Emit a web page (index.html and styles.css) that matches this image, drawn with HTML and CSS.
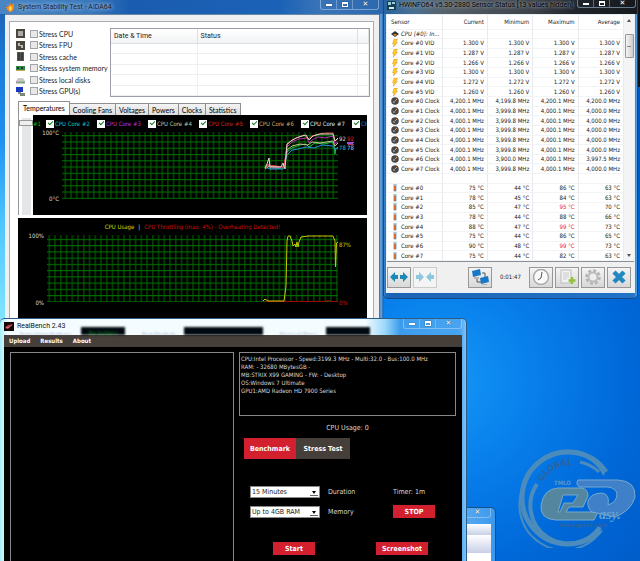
FILE: index.html
```
<!DOCTYPE html>
<html lang="en">
<head>
    <meta charset="UTF-8">
    <meta name="viewport" content="width=device-width, initial-scale=1.0">
    <title>Desktop</title>
    <link rel="stylesheet" href="styles.css">
</head>
<body>
    <div class="desktop">

        <svg class="watermark" width="124" height="104" viewBox="514 444 124 104">
            <g fill="none" stroke="#4c8cbc">
                <path d="M606 472 A46 46 0 1 0 600 531" stroke-width="5"/>
                <path d="M604 475 A42 42 0 0 0 527 480 A42 42 0 0 0 602 530" stroke-width="2"/>
                <path d="M599 472 A38 38 0 0 0 580 462" stroke-width="3"/>
                <path d="M537 484 A36 36 0 0 0 600 527" stroke-width="4"/>
            </g>
            <path fill="#5486a0" stroke="#78a8c8" fill-rule="evenodd" d="M558 488 H582 Q588 489 588 496 L583 507 H569 L566 512 H598 L594 520 H556 Q540 519 541 506 Q543 489 558 488 Z M563 495 H578 L573 503 H564 L560 512 H558 Z"/>
            <path fill="#3f80c8" stroke="#78a8d0" d="M578 480 H618 Q636 481 635 497 Q631 511 615 517 L592 512 Q587 508 588 501 Q591 493 602 493 Q610 494 608 505 Q617 502 617 494 Q616 488 608 487 H580 Q575 485 578 480 Z"/>
            <path id="ring" d="M543 482 A29 29 0 0 1 590 474" fill="none"/>
            <text class="wm-ring"><textPath href="#ring">GLOBAL</textPath></text>
            <text class="wm-top" x="554" y="485">TMLO</text>
            <text class="wm-asy" x="599" y="519">asy.</text>
            <text class="wm-url" x="559" y="527">www.gecid.com</text>
        </svg>

        <section class="window back-window">
            <div class="caption-buttons"><button class="close" aria-label="Close">✕</button></div>
            <div class="band"></div>
            <div class="band tall"></div>
            <div class="blank"></div>
        </section>

        <section class="window aida">
            <header class="titlebar">
                <svg width="9" height="10" viewBox="0 0 9 10"><path d="M1 2 L3 4 L4 0 L5 3 L8 1 L8 6 Q7 10 4 10 Q1 9 0 5 L2 5 Z" fill="#f08a18"/><path d="M3 5 L5 4 L6 6 L5 9 L3 8 Z" fill="#ffd850"/></svg>
                <h1>System Stability Test - AIDA64</h1>
                <div class="caption-buttons">
                    <button aria-label="Minimize"><i class="min"></i></button><button aria-label="Maximize"><i class="max"></i></button><button class="close" aria-label="Close">✕</button>
                </div>
            </header>
            <div class="aida-client">
                <div class="aida-panel">
                    <div class="aida-top">
                        <div class="stress-list">
                            <label><svg viewBox="0 0 9 9"><rect width="9" height="9" fill="#4a463e"/><rect x="2" y="2" width="5" height="5" fill="#aaa"/></svg><input type="checkbox">Stress CPU</label>
                            <label><svg viewBox="0 0 9 9"><rect width="9" height="9" fill="#4a463e"/><path d="M2 2h2v2h3v3H5V5H2z" fill="#bbb"/></svg><input type="checkbox">Stress FPU</label>
                            <label><svg viewBox="0 0 9 9"><rect x="1" width="7" height="9" fill="#555"/><path d="M3 1v7M6 1v7" stroke="#222"/></svg><input type="checkbox">Stress cache</label>
                            <label><svg viewBox="0 0 9 9"><rect y="2" width="9" height="4" fill="#2f8a4a"/><path d="M1 3h2v2H1zM5 3h2v2H5z" fill="#1c3c28"/><path d="M0 6.500h9" stroke="#c8a850"/></svg><input type="checkbox">Stress system memory</label>
                            <label><svg viewBox="0 0 9 9"><path d="M2 3h5l2 3v2H0V6z" fill="#c8c8c8"/><path d="M0 6.500h9v2H0z" fill="#999"/><rect x="6" y="7" width="2" height="1" fill="#3c3"/></svg><input type="checkbox">Stress local disks</label>
                            <label><svg viewBox="0 0 9 9"><rect width="7" height="5" fill="#1838c0"/><path d="M2 5h3v2H2z" fill="#889"/><path d="M4 6h5v3H4z" fill="#7a8a70"/></svg><input type="checkbox">Stress GPU(s)</label>
                        </div>
                        <div class="log-frame">
                            <table class="log">
                                <thead><tr><th class="col-date">Date &amp; Time</th><th>Status</th><th class="col-end"></th></tr></thead>
                                <tbody>
                                    <tr><td></td><td></td><td></td></tr>
                                    <tr><td></td><td></td><td></td></tr>
                                    <tr><td></td><td></td><td></td></tr>
                                    <tr><td></td><td></td><td></td></tr>
                                    <tr><td></td><td></td><td></td></tr>
                                </tbody>
                            </table>
                        </div>
                    </div>

                    <nav class="tabs">
                        <button class="active">Temperatures</button><button>Cooling Fans</button><button>Voltages</button><button>Powers</button><button>Clocks</button><button>Statistics</button>
                    </nav>

                    <div class="temp-row">
                        <div class="scale"><i></i></div>
                        <div class="chart">
                            <div class="legend">
                                <span class="first c1">#1</span>
                                <label class="c2"><input type="checkbox" checked>CPU Core #2</label>
                                <label class="c3"><input type="checkbox" checked>CPU Core #3</label>
                                <label class="c4"><input type="checkbox" checked>CPU Core #4</label>
                                <label class="c5"><input type="checkbox" checked>CPU Core #5</label>
                                <label class="c6"><input type="checkbox" checked>CPU Core #6</label>
                                <label class="c7"><input type="checkbox" checked>CPU Core #7</label>
                                <label class="c8"><input type="checkbox" checked>CPU Core #8</label>
                            </div>
                            <svg class="plot" viewBox="33 129 334 85">
                                <defs>
                                    <pattern id="gridA" x="62.500" y="131.500" width="5.700" height="6.260" patternUnits="userSpaceOnUse"><path d="M2.800 0V6.260M0 3.200H5.700" stroke="#006c00" fill="none"/></pattern>
                                </defs>
                                <rect x="62" y="131" width="276" height="67" fill="url(#gridA)"/>
                                <g fill="none">
                                    <path stroke="#20c040" d="M265 167L268 164L270 168L284 167L287 151L292 147L300 144L306 143L309 146L315 142L324 143L332 141L334 144L335 153L336 147L338 148"/>
                                    <path stroke="#2090e0" d="M265 166L270 168L283 168L287 154L292 149L298 148L306 146L314 147L322 144L333 145L335 149L338 146"/>
                                    <path stroke="#c8c890" d="M265 168L269 165L284 166L287 149L292 145L300 143L308 144L312 141L320 142L333 140L335 145L338 142"/>
                                    <path stroke="#b030b0" d="M265 165L268 163L271 167L284 166L287 146L292 141L299 138L307 137L309 142L312 139L318 136L325 137L333 135L335 143L338 141"/>
                                    <path stroke="#e04040" d="M266 167L268 164L284 166L287 144L292 139L299 136L304 134L308 138L312 135L319 133L326 132L333 132L335 140L338 138"/>
                                    <path stroke="#e0d8d0" d="M265 167L267 163L269 157L270 166L281 166L283 162L285 168L287 143L291 140L296 137L302 135L306 134L309 139L313 135L320 133L333 133L335 140L338 137"/>
                                    <path stroke="#9a50d8" d="M347 141.500H354M347 142.500H353"/>
                                    <path stroke="#c03060" d="M348 143.500H354"/>
                                </g>
                                <text x="59" y="134" text-anchor="end" fill="#ddd">100°C</text>
                                <text x="59" y="200" text-anchor="end" fill="#ddd">0°C</text>
                                <text x="339" y="140" fill="#ddd">92</text>
                                <text x="347" y="140" fill="#e02020">92</text>
                                <text x="347" y="149" fill="#9cd0f0">78</text>
                                <text x="339" y="149" fill="#18c0d0">78</text>
                            </svg>
                        </div>
                    </div>

                    <div class="chart usage">
                        <p class="usage-title"><span>CPU Usage</span><b>|</b><em>CPU Throttling (max: 4%) - Overheating Detected!</em></p>
                        <svg class="plot" viewBox="18 232 349 86">
                            <defs>
                                <pattern id="gridB" x="46.500" y="235.200" width="5.750" height="6.240" patternUnits="userSpaceOnUse"><path d="M2.800 0V6.240M0 3.200H5.750" stroke="#006c00" fill="none"/></pattern>
                            </defs>
                            <rect x="47" y="234" width="291" height="67" fill="url(#gridB)"/>
                            <path d="M265 300.500H324L328 299.500L332 300.500H338" stroke="#a00808" fill="none"/>
                            <path d="M263 300L265 298L268 300L284 300L286 285L287 240L288 235L290 235L292 240L293 245L295 243L296 246L297 241L298 246L299 241L301 236L308 235L333 235L335 240L335.500 266L336.500 242L338 241" stroke="#c8c800" fill="none"/>
                            <text x="44" y="237" text-anchor="end" fill="#ddd">100%</text>
                            <text x="44" y="304" text-anchor="end" fill="#ddd">0%</text>
                            <text x="339" y="246" fill="#c8c800">87%</text>
                            <text x="339" y="304" fill="#d01010">0%</text>
                        </svg>
                    </div>
                </div>
            </div>
        </section>

        <div class="dark-edge"></div>
        <section class="window hwinfo">
            <header class="titlebar">
                <svg width="9" height="9" viewBox="0 0 9 9"><rect width="9" height="9" fill="#12404e"/><path d="M1 1h3v3H1zM5 1h3v2H5z" fill="#9cc8d8"/><path d="M2 6h5v2H2z" fill="#d8e8f0"/></svg>
                <h1>HWiNFO64 v5.30-2880 Sensor Status [13 values hidden]</h1>
                <div class="caption-buttons">
                    <button aria-label="Minimize"><i class="min"></i></button><button aria-label="Maximize"><i class="max"></i></button><button class="close" aria-label="Close">✕</button>
                </div>
            </header>
            <svg class="symbols" width="0" height="0">
                <symbol id="bolt" viewBox="0 0 8 10"><path d="M3 0H7L5 4H7L2 10L3 6H1Z" fill="#ffd21a" stroke="#e07818" stroke-width=".6"/></symbol>
                <symbol id="clock" viewBox="0 0 8 8"><circle cx="4" cy="4" r="3.800" fill="#484848"/><path d="M4 4L6 2" stroke="#e8a030"/><circle cx="3" cy="5" r="1" fill="#999"/></symbol>
                <symbol id="therm" viewBox="0 0 8 9"><path d="M2 0H6V6Q7 8 4 9Q1 8 2 6Z" fill="#a8c8dc"/><path d="M4 2V8" stroke="#e06018" stroke-width="2"/></symbol>
            </svg>
            <div class="hw-client">
                <div class="hw-list">
                    <table class="sensors">
                        <thead><tr><th>Sensor</th><th>Current</th><th>Minimum</th><th>Maximum</th><th>Average</th></tr></thead>
                        <tbody>
                            <tr class="group"><td><svg viewBox="0 0 8 8"><path d="M0 4L4 1L8 4L4 7Z" fill="#333"/><path d="M2 4h4L4 7Z" fill="#c07830"/></svg>CPU [#0]: In...</td><td></td><td></td><td></td><td></td></tr>
                            <tr><td><svg><use href="#bolt"/></svg>Core #0 VID</td><td>1.300 V</td><td>1.300 V</td><td>1.300 V</td><td>1.300 V</td></tr>
                            <tr><td><svg><use href="#bolt"/></svg>Core #1 VID</td><td>1.287 V</td><td>1.287 V</td><td>1.287 V</td><td>1.287 V</td></tr>
                            <tr><td><svg><use href="#bolt"/></svg>Core #2 VID</td><td>1.266 V</td><td>1.266 V</td><td>1.266 V</td><td>1.266 V</td></tr>
                            <tr><td><svg><use href="#bolt"/></svg>Core #3 VID</td><td>1.300 V</td><td>1.300 V</td><td>1.300 V</td><td>1.300 V</td></tr>
                            <tr><td><svg><use href="#bolt"/></svg>Core #4 VID</td><td>1.272 V</td><td>1.272 V</td><td>1.272 V</td><td>1.272 V</td></tr>
                            <tr><td><svg><use href="#bolt"/></svg>Core #5 VID</td><td>1.260 V</td><td>1.260 V</td><td>1.260 V</td><td>1.260 V</td></tr>
                            <tr><td><svg><use href="#clock"/></svg>Core #0 Clock</td><td>4,200.1 MHz</td><td>4,199.8 MHz</td><td>4,200.1 MHz</td><td>4,200.0 MHz</td></tr>
                            <tr><td><svg><use href="#clock"/></svg>Core #1 Clock</td><td>4,000.1 MHz</td><td>3,999.8 MHz</td><td>4,000.1 MHz</td><td>4,000.0 MHz</td></tr>
                            <tr><td><svg><use href="#clock"/></svg>Core #2 Clock</td><td>4,000.1 MHz</td><td>3,999.8 MHz</td><td>4,000.1 MHz</td><td>4,000.0 MHz</td></tr>
                            <tr><td><svg><use href="#clock"/></svg>Core #3 Clock</td><td>4,000.1 MHz</td><td>3,999.8 MHz</td><td>4,000.1 MHz</td><td>4,000.0 MHz</td></tr>
                            <tr><td><svg><use href="#clock"/></svg>Core #4 Clock</td><td>4,000.1 MHz</td><td>3,999.8 MHz</td><td>4,000.1 MHz</td><td>4,000.0 MHz</td></tr>
                            <tr><td><svg><use href="#clock"/></svg>Core #5 Clock</td><td>4,000.1 MHz</td><td>3,999.8 MHz</td><td>4,000.1 MHz</td><td>4,000.0 MHz</td></tr>
                            <tr><td><svg><use href="#clock"/></svg>Core #6 Clock</td><td>4,000.1 MHz</td><td>3,900.0 MHz</td><td>4,000.1 MHz</td><td>3,997.5 MHz</td></tr>
                            <tr><td><svg><use href="#clock"/></svg>Core #7 Clock</td><td>4,000.1 MHz</td><td>3,999.8 MHz</td><td>4,000.1 MHz</td><td>4,000.0 MHz</td></tr>
                            <tr><td>&nbsp;</td><td></td><td></td><td></td><td></td></tr>
                            <tr><td><svg><use href="#therm"/></svg>Core #0</td><td>75 °C</td><td>44 °C</td><td>86 °C</td><td>63 °C</td></tr>
                            <tr><td><svg><use href="#therm"/></svg>Core #1</td><td>78 °C</td><td>45 °C</td><td>84 °C</td><td>63 °C</td></tr>
                            <tr><td><svg><use href="#therm"/></svg>Core #2</td><td>85 °C</td><td>47 °C</td><td class="hot">95 °C</td><td>70 °C</td></tr>
                            <tr><td><svg><use href="#therm"/></svg>Core #3</td><td>78 °C</td><td>44 °C</td><td>88 °C</td><td>66 °C</td></tr>
                            <tr><td><svg><use href="#therm"/></svg>Core #4</td><td>88 °C</td><td>47 °C</td><td class="hot">99 °C</td><td>73 °C</td></tr>
                            <tr><td><svg><use href="#therm"/></svg>Core #5</td><td>75 °C</td><td>44 °C</td><td>86 °C</td><td>65 °C</td></tr>
                            <tr><td><svg><use href="#therm"/></svg>Core #6</td><td>90 °C</td><td>48 °C</td><td class="hot">99 °C</td><td>73 °C</td></tr>
                            <tr><td><svg><use href="#therm"/></svg>Core #7</td><td>75 °C</td><td>44 °C</td><td>82 °C</td><td>63 °C</td></tr>
                        </tbody>
                    </table>
                    <div class="scrollbar"><i class="up"></i><i class="thumb"></i><i class="down"></i></div>
                </div>
                <div class="toolbar">
                    <button aria-label="Expand"><svg viewBox="0 0 20 16"><path d="M1 8L6 3V6H9V10H6V13ZM19 8L14 3V6H11V10H14V13Z" fill="#1c88b8"/></svg></button>
                    <button class="off" aria-label="Shrink"><svg viewBox="0 0 20 16"><path d="M9 8L4 3V6H1V10H4V13ZM11 8L16 3V6H19V10H16V13Z" fill="#8cc8dc"/></svg></button>
                    <button class="net" aria-label="Network"><svg viewBox="0 0 20 16"><path d="M7 10V13H12M12 4H15V8" stroke="#555" fill="none"/><path d="M2 2L10 0L11 6L3 8Z" fill="#1878c8"/><path d="M10 9L18 7L19 13L11 15Z" fill="#1878c8"/><path d="M4 9H9M12 16H17" stroke="#888"/></svg></button>
                    <time>0:01:47</time>
                    <button aria-label="Clock"><svg viewBox="0 0 20 16"><circle cx="10" cy="8" r="7.500" fill="#fafafa" stroke="#aaa" stroke-width="1.500"/><path d="M11 3L10 9L7 11" stroke="#555" fill="none"/></svg></button>
                    <button aria-label="Add report"><svg viewBox="0 0 20 16"><rect x="4" y="1" width="10" height="13" fill="#f2f2f2" stroke="#bbb"/><path d="M6 4h6M6 6h6M6 8h6M6 10h4" stroke="#ccc"/><path d="M15 8V15M11.500 11.500H18.500" stroke="#94c23c" stroke-width="2.500"/></svg></button>
                    <button aria-label="Settings"><svg viewBox="0 0 20 16"><circle cx="10" cy="8" r="6.500" fill="none" stroke="#b4b4b4" stroke-width="2.500" stroke-dasharray="3 2"/><circle cx="10" cy="8" r="4.500" fill="#eee" stroke="#bbb" stroke-width="2"/></svg></button>
                    <button aria-label="Close sensors"><svg viewBox="0 0 20 16"><path d="M5 3L15 13M15 3L5 13" stroke="#2488c0" stroke-width="4.500"/></svg></button>
                </div>
            </div>
        </section>

        <section class="window realbench">
            <header class="titlebar">
                <div class="behind" aria-hidden="true">
                    <span>Remaining Battery:</span><i>No battery</i>
                    <span>Test Started:</span><i class="wide"></i>
                    <span>Elapsed Time:</span><i class="last"></i>
                </div>
                <svg width="10" height="9" viewBox="0 0 10 9"><rect width="10" height="9" fill="#140808"/><path d="M1 6L4 3L9 2L6 4L4 7Z" fill="#c03038"/><path d="M2 5L4 6L8 3" stroke="#e8a0a0" stroke-width=".7" fill="none"/></svg>
                <h1>RealBench 2.43</h1>
                <div class="caption-buttons">
                    <button aria-label="Minimize"><i class="min"></i></button><button aria-label="Maximize"><i class="max"></i></button><button class="close" aria-label="Close">✕</button>
                </div>
            </header>
            <div class="rb-client">
                <nav class="menu"><a href="#">Upload</a><a href="#">Results</a><a href="#">About</a></nav>
                <div class="rb-body">
                    <div class="output"></div>
                    <div class="rb-right">
                        <div class="sysinfo">
                            CPU:Intel Processor - Speed:3199.3 MHz - Multi:32.0 - Bus:100.0 MHz<br>
                            RAM: - 32680 MBytesGB -<br>
                            MB:STRIX X99 GAMING - FW: - Desktop<br>
                            OS:Windows 7 Ultimate<br>
                            GPU1:AMD Radeon HD 7900 Series
                        </div>
                        <p class="cpu-usage">CPU Usage: 0</p>
                        <div class="modes"><button class="on">Benchmark</button><button>Stress Test</button></div>
                        <div class="form">
                            <span class="select"><select id="duration"><option>15 Minutes</option></select></span>
                            <label for="duration">Duration</label>
                            <span>Timer: 1m</span>
                            <span class="select"><select id="memory"><option>Up to 4GB RAM</option></select></span>
                            <label for="memory">Memory</label>
                            <button class="red">STOP</button>
                        </div>
                        <div class="actions"><button class="red">Start</button><button class="red shot">Screenshot</button></div>
                    </div>
                </div>
            </div>
        </section>
    </div>
</body>
</html>
```
FILE: styles.css
```
* {
    box-sizing: border-box;
}
body {
    margin: 0;
    font-family: "DejaVu Sans Condensed", "DejaVu Sans", sans-serif;
    font-size: 6px;
    line-height: 8px;
    color: #222;
}
button, select, input {
    font: inherit;
    margin: 0;
    padding: 0;
    border: 0;
    border-radius: 0;
}
h1, p {
    margin: 0;
    font-size: inherit;
    font-weight: normal;
}
.desktop {
    position: relative;
    height: 100vh;
    overflow: hidden;
    background: radial-gradient(circle at 440px 380px, #1597f6 0, #0880ec 90px, #0068d8 190px, #0058c4 300px);
}
.window {
    position: absolute;
    display: flex;
    flex-direction: column;
}
.titlebar {
    position: relative;
    display: flex;
    align-items: center;
    gap: 3px;
    flex: none;
    font-family: Roboto, sans-serif;
    font-size: 7px;
}
.caption-buttons {
    display: flex;
    position: absolute;
    top: 0;
    border: 1px solid rgba(190, 220, 250, 0.5);
    border-top: 0;
    border-radius: 0 0 3px 3px;
}
.caption-buttons button {
    display: flex;
    align-items: center;
    justify-content: center;
    width: 16px;
    height: 9px;
    background: none;
    border-right: 1px solid rgba(190, 220, 250, 0.4);
    color: #fff;
    font-family: "DejaVu Sans", sans-serif;
    font-size: 7px;
    line-height: 9px;
    text-shadow: 0 0 1px #333;
}
.caption-buttons .close {
    width: 25px;
    border-right: 0;
}
.min {
    width: 6px;
    height: 2px;
    background: #fff;
    box-shadow: 0 0 1px #333;
}
.max {
    width: 6px;
    height: 5px;
    border: 1px solid #fff;
    border-top-width: 2px;
    box-shadow: 0 0 1px #333;
}

/* AIDA64 */
.aida {
    left: 0;
    top: 0;
    bottom: 0;
    width: 384px;
    padding: 0 5px;
    background: linear-gradient(90deg, transparent 378px, #2c6cb4 379px, #6aa8e0 381px, #2a6cb4 383px), linear-gradient(#1c5cac 0, #1f66b8 15px, #1a7ad8 60px, #2090f0 140px, #4cc4ff 220px, #80e4ff 318px);
}
.aida .titlebar {
    height: 14px;
    margin: 0 -5px;
    padding: 0 6px;
    background: linear-gradient(90deg, #4a86c4, #3a78bc 90px, #1a5cb0 130px, #1b62b6 280px, #3a74b8 320px, #2c66ac);
}
.aida h1 {
    text-shadow: 0 0 4px #a8c8e8, 0 0 4px #a8c8e8;
}
.aida .caption-buttons {
    right: 5px;
}
.aida-client {
    flex: 1;
    padding: 6px 5px 0 4px;
    background: #f0f0f0;
    border-top: 1px solid #6888a8;
}
.aida-panel {
    height: 100%;
    padding: 6px 6px 0 8px;
    background: #fff;
    border: 1px solid #a8acb4;
}
.aida-top {
    display: flex;
    gap: 6px;
    height: 69px;
    margin-right: -3px;
}
.stress-list {
    display: grid;
    grid-auto-rows: 1fr;
    width: 88px;
    margin-left: -2px;
    font-family: Lato, sans-serif;
    font-size: 7px;
}
.stress-list label {
    display: flex;
    align-items: center;
    white-space: nowrap;
}
.stress-list svg {
    width: 9px;
    height: 9px;
    margin-right: 5px;
}
input[type="checkbox"] {
    appearance: none;
    flex: none;
    width: 8px;
    height: 8px;
    margin-right: 1px;
    background: #e8e8e8;
    border: 1px solid #a0a4a8;
}
.log-frame {
    flex: 1;
    border: 1px solid #9a9ea8;
}
.log {
    width: 100%;
    height: 100%;
    table-layout: fixed;
    border-collapse: collapse;
    font-family: Roboto, sans-serif;
    font-size: 7px;
}
.log th {
    height: 14px;
    padding: 0 3px;
    font-weight: normal;
    text-align: left;
    background: linear-gradient(#fff, #f2f3f5);
    border: solid #dcdfe4;
    border-width: 0 1px 1px 0;
}
.log td {
    padding: 0;
    border: solid #eeeff2;
    border-width: 0 1px 1px 0;
}
.log .col-date {
    width: 86px;
}
.log .col-end {
    width: 11px;
    padding: 0;
}
.tabs {
    display: flex;
    align-items: flex-end;
    height: 18px;
}
.tabs button {
    height: 12px;
    padding: 0 3px;
    background: linear-gradient(#f4f4f4, #dcdcdc);
    border: 1px solid #8e8f8f;
    border-bottom: 0;
    margin-left: -1px;
    font-family: Lato, sans-serif;
    font-size: 7px;
}
.tabs .active {
    height: 14px;
    padding: 0 4px 2px;
    margin-left: 0;
    background: #fff;
}
.temp-row {
    display: flex;
}
.scale {
    width: 15px;
    padding: 3px 3px 4px;
    border-left: 1px solid #999;
    background: linear-gradient(90deg, transparent 3px, #e4e6e8 3px, #e4e6e8 12px, transparent 12px) no-repeat 0 3px;
}
.scale i {
    display: block;
    width: 14px;
    height: 6px;
    margin: 2px -3px;
    border: 1px solid #999;
    background: #eee;
}
.chart {
    flex: 1;
    min-width: 0;
    background: #000;
}
.legend {
    display: flex;
    align-items: center;
    height: 15px;
    padding-top: 3px;
    overflow: hidden;
    white-space: nowrap;
}
.legend label {
    display: flex;
    flex: none;
    align-items: center;
    width: 51px;
}
.legend input[type="checkbox"] {
    position: relative;
    background: #fff;
    border: 0;
}
.legend input::after {
    content: "";
    position: absolute;
    left: 2px;
    top: 1px;
    width: 4px;
    height: 2px;
    border: solid #108020;
    border-width: 0 0 1px 1px;
    transform: rotate(-45deg);
}
.first {
    flex: none;
    width: 13px;
}
.c1 { color: #00c000; }
.c2 { color: #00c8d0; }
.c3 { color: #c030d0; }
.c4 { color: #b8c8b0; }
.c5 { color: #d02020; }
.c6 { color: #d8a860; }
.c7 { color: #e0e0e0; }
.c8 { color: #2080e0; }
.plot {
    display: block;
    width: 100%;
}
.plot text {
    font-size: 6px;
}
.usage {
    margin-top: 3px;
}
.usage-title {
    display: flex;
    align-items: center;
    justify-content: center;
    gap: 4px;
    height: 15px;
    padding-top: 3px;
    color: #d8d800;
}
.usage-title b {
    color: #ddd;
    font-weight: normal;
}
.usage-title em {
    color: #d01010;
    font-style: normal;
}

/* HWiNFO */
.dark-edge {
    position: absolute;
    left: 630px;
    right: 0;
    top: 0;
    height: 87px;
    background: #101418;
}
.hwinfo {
    left: 383px;
    top: 0;
    width: 255px;
    height: 299px;
    padding: 0 2px 5px;
    background: linear-gradient(90deg, #3c86d0, #1c62b4 3px, #2274c8 250px, #5aa4e4);
    border: 1px solid #144a88;
    border-top: 0;
    border-radius: 0 0 5px 5px;
}
.hwinfo .titlebar {
    height: 14px;
    margin: 0 -2px;
    padding: 0 3px 4px;
    background: linear-gradient(90deg, #2a64a0, #4a7090 30px, #58626a 60px, #3c4248 150px, #20262c 190px, #15191d);
}
.hwinfo h1 {
    white-space: nowrap;
    color: #000;
    text-shadow: 0 0 3px #a0a8b0, 0 0 4px #a0a8b0;
}
.hwinfo .caption-buttons {
    right: 1px;
}
.hwinfo .caption-buttons button {
    height: 7px;
}
.symbols {
    position: absolute;
}
.hw-client {
    flex: 1;
    display: flex;
    flex-direction: column;
    background: #f0f0f0;
    border: 1px solid #e8f0f8;
}
.hw-list {
    display: flex;
    flex: 1;
    background: #fff;
    border-bottom: 1px solid #8a9098;
}
.sensors {
    flex: 1;
    table-layout: fixed;
    border-collapse: collapse;
}
.sensors th, .sensors td {
    padding: 0 3px 0 0;
    text-align: right;
    white-space: nowrap;
    border-right: 1px solid #e8eaee;
    border-bottom: 1px solid #f2f3f5;
}
.sensors th {
    height: 14px;
    font-weight: normal;
}
.sensors th:first-child {
    width: 55px;
    padding-left: 4px;
    text-align: left;
}
.sensors td:first-child {
    padding: 0 0 0 4px;
    text-align: left;
}
.sensors svg {
    width: 8px;
    height: 8px;
    margin-right: 2px;
    vertical-align: top;
}
.group {
    font-style: italic;
}
.sensors .hot {
    color: #f01818;
}
.scrollbar {
    display: flex;
    flex-direction: column;
    align-items: center;
    width: 10px;
    padding: 4px 0;
    background: #f4f4f4;
}
.up, .down {
    border: solid transparent;
    border-width: 0 2px;
}
.up {
    border-bottom: 3px solid #555;
}
.down {
    margin-top: auto;
    border-top: 3px solid #555;
}
.thumb {
    width: 9px;
    height: 24px;
    margin-top: 12px;
    background: linear-gradient(#888, #888) center / 4px 1px no-repeat, linear-gradient(90deg, #f4f4f4, #ccc);
    border: 1px solid #999;
    border-radius: 1px;
}
.toolbar {
    display: flex;
    align-items: center;
    gap: 2px;
    height: 30px;
}
.toolbar button {
    display: flex;
    align-items: center;
    justify-content: center;
    width: 24px;
    height: 21px;
    background: linear-gradient(#f4f4f4, #e6e6e6 50%, #d8d8d8);
    border: 1px solid #989898;
}
.toolbar .off {
    background: #f4f4f4;
    border-color: #ccc;
}
.toolbar .net {
    margin-left: 29px;
}
.toolbar svg {
    width: 20px;
    height: 16px;
}
.toolbar time {
    flex: 1;
    text-align: center;
}
.toolbar button:last-child {
    margin-right: 3px;
}

/* RealBench */
.realbench {
    left: 0;
    top: 318px;
    bottom: -6px;
    width: 467px;
    padding: 0 4px;
    border: 1px solid #2c5c88;
    border-left: 0;
    border-radius: 5px 5px 0 0;
    background: linear-gradient(90deg, #a8eef8 0, #f4fcff 8px, #f4fcff 365px, #9cd8fa 385px, #3c9cec 400px, #48a4f0 460px, #7cc4f8);
    color: #d8d8d8;
}
.realbench .titlebar {
    height: 16px;
    padding-bottom: 2px;
    color: #111;
}
.realbench .caption-buttons {
    right: 0;
}
.behind {
    position: absolute;
    left: 16px;
    right: 80px;
    bottom: 0;
    display: flex;
    align-items: center;
    height: 8px;
    overflow: hidden;
    color: #7890b0;
    font-family: "DejaVu Sans Condensed", "DejaVu Sans", sans-serif;
    font-size: 6px;
    filter: blur(1px);
}
.behind span {
    flex: none;
    width: 61px;
    padding-top: 7px;
}
.behind i {
    flex: none;
    width: 44px;
    height: 8px;
    margin-right: 17px;
    background: #000810;
    color: #108020;
    text-align: center;
    font-style: normal;
    line-height: 12px;
}
.behind .wide {
    width: 79px;
    margin-left: -19px;
}
.behind .last {
    margin-left: -15px;
}
.realbench h1, .realbench .titlebar > svg {
    position: relative;
}
.rb-client {
    display: flex;
    flex: 1;
    flex-direction: column;
    background: #000;
}
.menu {
    display: flex;
    gap: 10px;
    padding: 2px 5px;
    background: #463e38;
}
.menu a {
    color: #fff;
    font-weight: bold;
    text-decoration: none;
}
.rb-body {
    display: grid;
    flex: 1;
    grid-template-columns: 224fr 217fr;
    gap: 5px;
    padding: 5px 6px 0;
}
.output, .sysinfo {
    border: 1px solid #888;
}
.output {
    border-bottom: 0;
}
.sysinfo {
    height: 64px;
    padding: 2px 1px;
    white-space: nowrap;
}
.cpu-usage {
    margin: 8px 0 6px;
    text-align: center;
    font-size: 7px;
}
.modes {
    display: flex;
    padding-left: 5px;
}
.modes button {
    width: 54px;
    height: 21px;
    background: #463e38;
    color: #fff;
    font-size: 7px;
    font-weight: bold;
}
.modes .on {
    width: 52px;
}
.modes .on, .red {
    background: #d3202f;
}
.form {
    display: grid;
    grid-template-columns: 70px 57px 42px;
    gap: 7px 8px;
    align-items: center;
    margin-top: 27px;
    padding-left: 11px;
    font-size: 7px;
}
.select {
    position: relative;
    display: block;
}
.select::after {
    content: "";
    position: absolute;
    right: 4px;
    top: 5px;
    border: 2px solid transparent;
    border-top: 3px solid #000;
    border-bottom: 0;
}
.select select {
    appearance: none;
    display: block;
    width: 100%;
    height: 12px;
    padding-left: 1px;
    background: linear-gradient(#666, #666) right 1px bottom 1px / 8px 1px no-repeat #fff;
    border: 1px solid #888;
    color: #222;
}
.red {
    width: 42px;
    height: 13px;
    color: #fff;
    font-size: 7px;
    font-weight: bold;
}
.actions {
    display: flex;
    gap: 61px;
    margin-top: 24px;
    padding-left: 34px;
}
.shot {
    width: 52px;
}

/* window behind RealBench */
.back-window {
    left: 440px;
    top: 507px;
    bottom: -6px;
    width: 56px;
    padding: 16px 4px 0 0;
    background: linear-gradient(90deg, #6cb8f4, #3c98ec);
    border: 1px solid #14508c;
    border-radius: 5px;
}
.back-window .caption-buttons {
    right: 4px;
}
.band {
    height: 11px;
    background: linear-gradient(#fff, #c8d0e8);
}
.band.tall {
    height: 18px;
}
.blank {
    flex: 1;
    background: #fff;
}

/* wallpaper logo */
.watermark {
    position: absolute;
    right: 2px;
    bottom: 13px;
}
.watermark text {
    fill: #2c64a0;
    font-weight: bold;
}
.wm-ring {
    font-size: 9px;
}
.watermark .wm-top {
    font-size: 6px;
    fill: #5c98c8;
}
.watermark .wm-asy {
    font-family: "Liberation Serif", serif;
    font-size: 14px;
    font-style: italic;
    fill: #68a0cc;
}
.watermark .wm-url {
    font-size: 6px;
}
```
